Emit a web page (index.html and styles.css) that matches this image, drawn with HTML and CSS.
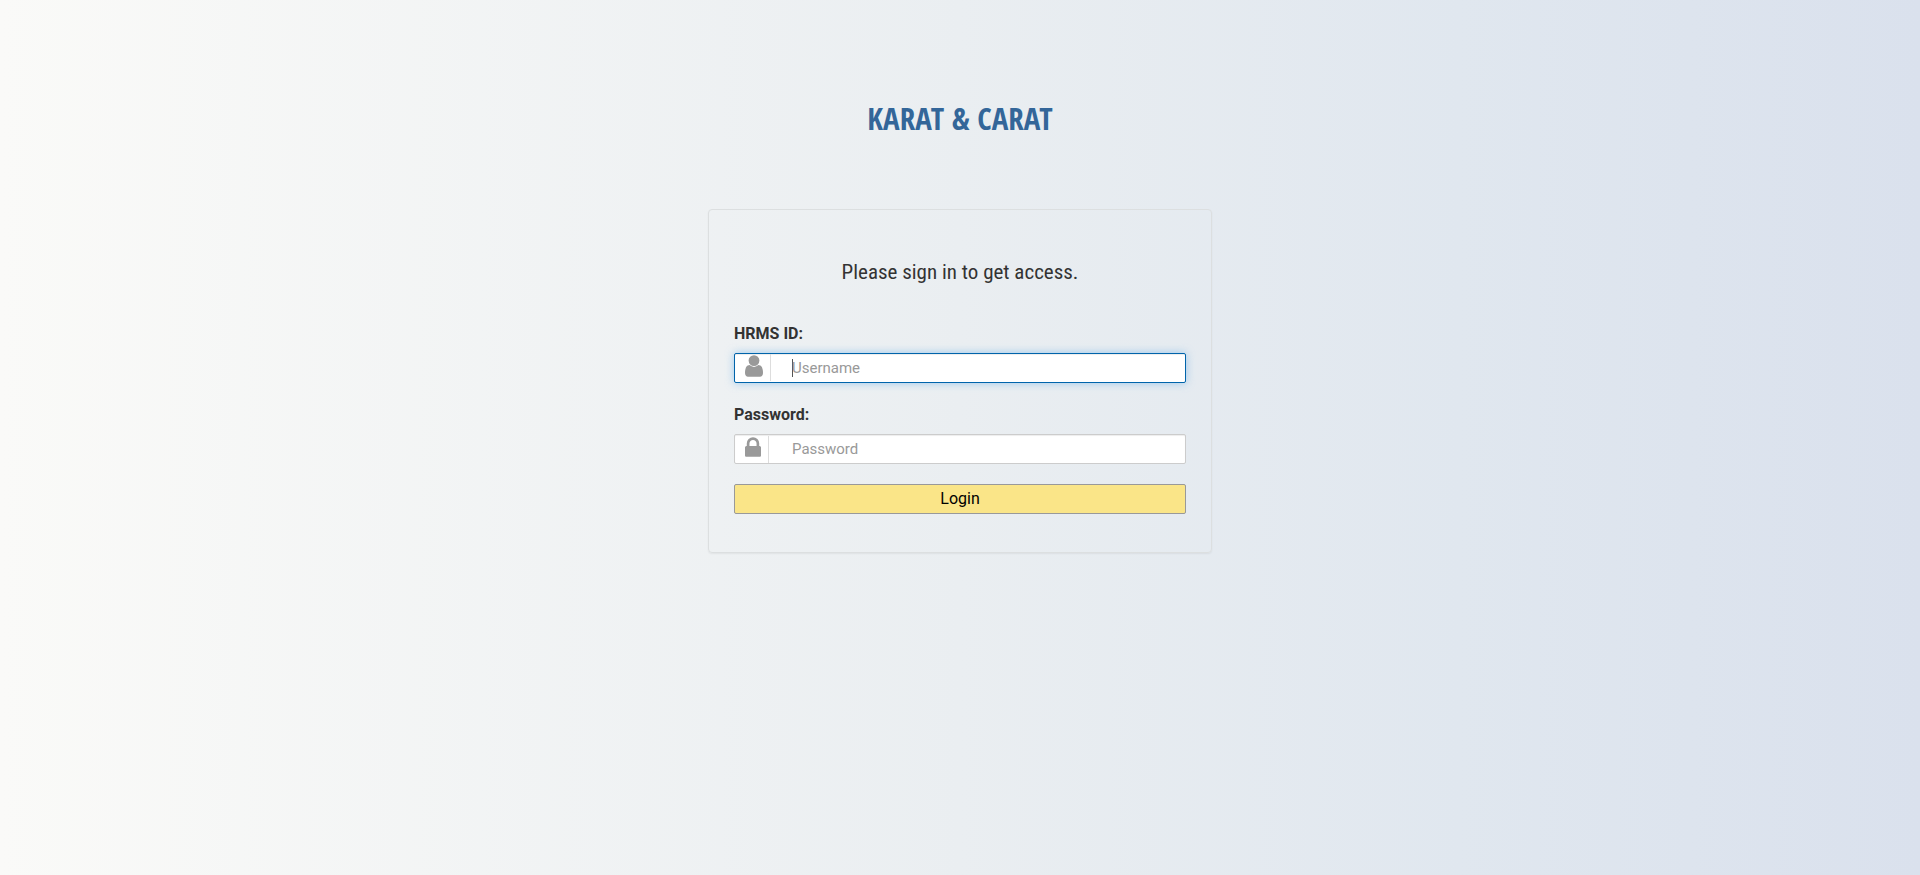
FILE: index.html
```html
<!DOCTYPE html>
<html lang="en">
<head>
<meta charset="utf-8">
<meta name="viewport" content="width=device-width, initial-scale=1">
<title>Karat &amp; Carat</title>
<link rel="stylesheet" href="styles.css">
</head>
<body>
<main class="page">
  <h1 class="brand">KARAT &amp; CARAT</h1>
  <form class="card">
    <p class="intro">Please sign in to get access.</p>
    <label class="label" for="username">HRMS ID:</label>
    <div class="field">
      <span class="icon"><svg width="18" height="22" viewBox="256 128 1280 1536" aria-hidden="true"><path d="M1536 1399q0 109-62.5 187t-150.500 78h-854q-88 0-150.500-78t-62.500-187q0-85 8.500-160.500t31.500-152 58.500-131 94-89 134.500-34.500q131 128 313 128t313-128q76 0 134.500 34.500t94 89 58.500 131 31.500 152 8.500 160.500zm-256-887q0 159-112.500 271.500t-271.500 112.500-271.500-112.500-112.500-271.500 112.500-271.500 271.500-112.500 271.500 112.500 112.500 271.500z"/></svg></span>
      <input class="input" id="username" type="text" placeholder="Username" autofocus>
    </div>
    <label class="label" for="password">Password:</label>
    <div class="field">
      <span class="icon icon-lock"><svg width="16" height="20" viewBox="320 128 1152 1408" aria-hidden="true"><path d="M640 768h512v-192q0-106-75-181t-181-75-181 75-75 181v192zm832 96v576q0 40-28 68t-68 28h-960q-40 0-68-28t-28-68v-576q0-40 28-68t68-28h32v-192q0-184 132-316t316-132 316 132 132 316v192h32q40 0 68 28t28 68z"/></svg></span>
      <input class="input" id="password" type="password" placeholder="Password">
    </div>
    <button class="login" type="submit">Login</button>
  </form>
</main>
</body>
</html>
```

FILE: styles.css
```css
* { box-sizing: border-box; }

body {
  margin: 0;
  min-height: 100vh;
  background: linear-gradient(to right, #fafaf8 0%, #eaeef1 50%, #e0e7ef 76%, #dae1ed 100%);
  color: #333;
  font: 16px/24px Roboto, sans-serif;
}

.page {
  display: flex;
  flex-direction: column;
  align-items: center;
  padding: 98px 16px 0;
}

.brand {
  margin: 0 0 71px;
  color: #336699;
  font: bold 31px/40px "Open Sans Condensed", "Open Sans", sans-serif;
}

.card {
  display: flex;
  flex-direction: column;
  width: 100%;
  max-width: 504px;
  padding: 46px 25px 38px;
  border: 1px solid #dcdfe0;
  border-radius: 4px;
  box-shadow: 0 1px 2px rgba(0, 0, 0, .06);
}

.intro {
  margin: 0 0 34px;
  font: 21px/32px "Roboto Condensed", Roboto, sans-serif;
  text-align: center;
}

.label {
  margin-bottom: 7px;
  font-weight: 700;
}

.field {
  display: flex;
  height: 30px;
  margin-bottom: 20px;
  border: 1px solid #ccc;
  border-radius: 2px;
  background: #fff;
  box-shadow: inset 0 1px 1px rgba(0, 0, 0, .075);
}

.field:focus-within {
  border-color: #0064ab;
  box-shadow: inset 0 1px 1px rgba(0, 0, 0, .075), 0 0 8px rgba(102, 175, 233, .6);
}

.icon {
  flex: none;
  width: 36px;
  height: 27px;
  padding: 1px 0 0 10px;
  border-right: 1px solid #ddd;
  line-height: 0;
}

.icon-lock {
  width: 34px;
  margin: 1px 2px 0 0;
}

.icon svg { fill: #999; }

.input {
  flex: 1;
  min-width: 0;
  padding: 0 12px 0 21px;
  border: 0;
  outline: 0;
  background: transparent;
  color: #555;
  font: 15px/20px Roboto, sans-serif;
}

.input::placeholder { color: #999; }

/* Steady insertion bar while the focused box is empty */
.input:focus:placeholder-shown {
  background: linear-gradient(#555, #555) 21px 5px / 1px 18px no-repeat;
  caret-color: transparent;
}

.login {
  height: 30px;
  padding: 0;
  border: 1px solid #999;
  border-radius: 2px;
  background: #fae588;
  color: #000;
  font: 16px/24px Roboto, sans-serif;
}
```
